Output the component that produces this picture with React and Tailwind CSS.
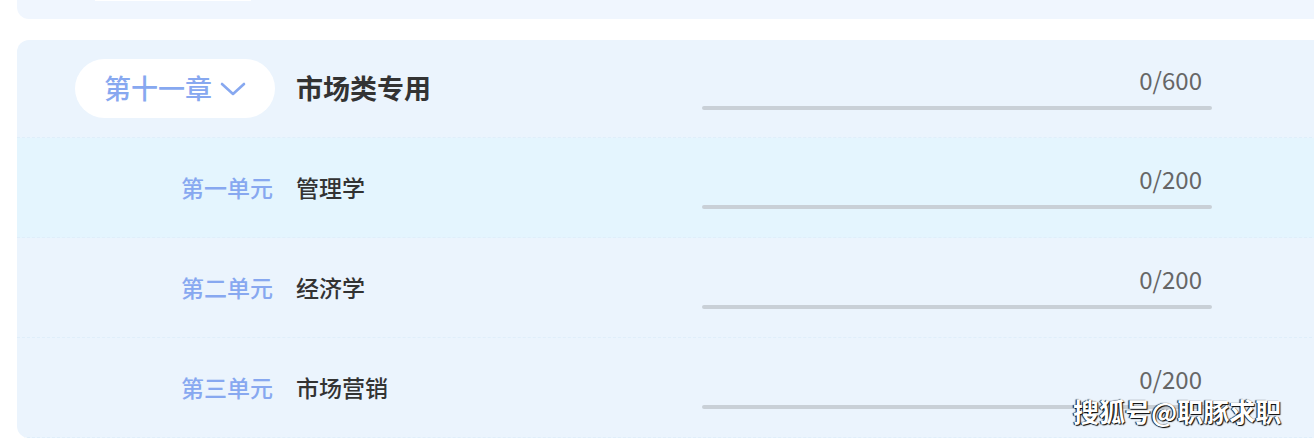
import React from 'react';

const units = [
  { label: '第一单元', name: '管理学', done: 0, total: 200, active: true },
  { label: '第二单元', name: '经济学', done: 0, total: 200 },
  { label: '第三单元', name: '市场营销', done: 0, total: 200 },
];

const Progress = ({ done, total, className = '' }) => (
  <div className={`w-[510px] flex flex-col items-end ${className}`}>
    <span className="pr-[10px] text-[24px] leading-[28px] text-[#666666]">{done}/{total}</span>
    <div className="mt-[12px] h-[4px] w-full rounded-full bg-[#c9d0d7]">
      <div className="h-full rounded-full bg-[#5b8ff9]" style={{ width: `${(done / total) * 100}%` }} />
    </div>
  </div>
);

const App = () => {
  return (
    <div
      className="relative w-[1314px] h-[440px] overflow-hidden bg-white"
      style={{ fontFamily: '"Noto Sans CJK SC", "Noto Sans", sans-serif' }}
    >
      {/* previous chapter tail */}
      <div className="ml-[17px] w-[1320px] h-[19px] rounded-b-[12px] bg-[#f0f6fe] relative">
        <div className="absolute left-[78px] top-0 w-[156px] h-[1px] bg-white" />
      </div>

      {/* chapter card */}
      <div className="ml-[17px] mt-[21px] w-[1320px] rounded-[12px] bg-[#ebf4fd] overflow-hidden">
        <div className="flex items-center h-[98px] border-b border-dashed border-[#dfeefa]">
          <button className="ml-[58px] flex items-center justify-center gap-[8px] w-[200px] h-[59px] rounded-full bg-white text-[#87a8f0] text-[27px] font-medium">
            <span>第十一章</span>
            <svg width="26" height="16" viewBox="0 0 26 16" fill="none" stroke="#87a8f0" strokeWidth="2.6" strokeLinecap="round" strokeLinejoin="round">
              <path d="M2 3 L13 13 L24 3" />
            </svg>
          </button>
          <span className="ml-[21px] w-[200px] text-[27px] font-bold text-[#333333]">市场类专用</span>
          <Progress done={0} total={600} className="ml-[206px] mt-[-2px]" />
        </div>

        {units.map((u) => (
          <div
            key={u.label}
            className={`flex items-center h-[100px] border-b border-dashed border-[#dfeefa] ${u.active ? 'bg-[#e4f5fe]' : ''}`}
          >
            <span className="ml-[164px] w-[94px] text-[23px] font-medium text-[#87a8f0]">{u.label}</span>
            <span className="ml-[21px] w-[200px] text-[23px] font-medium text-[#333333]">{u.name}</span>
            <Progress done={u.done} total={u.total} className="ml-[206px] mt-[-2px]" />
          </div>
        ))}
      </div>

      {/* watermark */}
      <div
        className="absolute left-[1073px] top-[391px] text-[26px] font-bold text-white"
        style={{ textShadow: '1px 1px 1px #000, -1px 0 1px #000' }}
      >
        搜狐号@职豚求职
      </div>
    </div>
  );
};

export default App;
